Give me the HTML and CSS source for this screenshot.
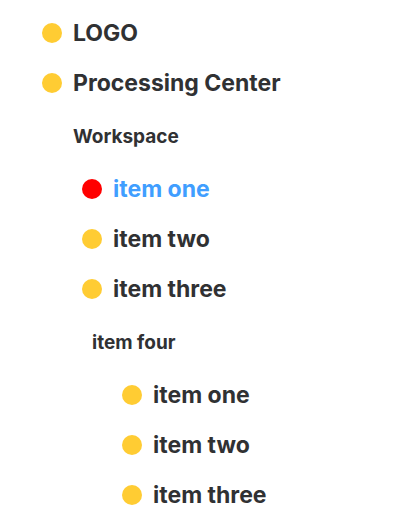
FILE: index.html
```html
<!DOCTYPE html>
<html lang="en">
<head>
    <meta charset="UTF-8">
    <title>Menu</title>
    <link rel="stylesheet" href="styles.css">
</head>
<body>
    <ul class="menu">
        <li class="item"><span class="dot"></span>LOGO</li>
        <li class="item"><span class="dot"></span>Processing Center</li>
        <li class="group">
            <div class="group-title">Workspace</div>
            <ul class="sub">
                <li class="item active"><span class="dot"></span>item one</li>
                <li class="item"><span class="dot"></span>item two</li>
                <li class="item"><span class="dot"></span>item three</li>
                <li class="group">
                    <div class="group-title">item four</div>
                    <ul class="sub">
                        <li class="item"><span class="dot"></span>item one</li>
                        <li class="item"><span class="dot"></span>item two</li>
                        <li class="item"><span class="dot"></span>item three</li>
                    </ul>
                </li>
            </ul>
        </li>
    </ul>
</body>
</html>
```

FILE: styles.css
```css
* {
    margin: 0;
    padding: 0;
    box-sizing: border-box;
}

body {
    font-family: Inter, "Noto Sans", sans-serif;
    background-color: #ffffff;
    color: #303133;
}

ul {
    list-style: none;
}

.menu {
    padding: 8px 0 0 42px;
}

.item {
    display: flex;
    align-items: center;
    gap: 11px;
    height: 50px;
    font-size: 23px;
    font-weight: 700;
}

.dot {
    width: 20px;
    height: 20px;
    border-radius: 50%;
    background-color: #ffcc33;
    flex-shrink: 0;
}

.item.active {
    color: #409eff;
}

.item.active .dot {
    background-color: #ff0000;
}

.group-title {
    display: flex;
    align-items: center;
    height: 56px;
    padding-left: 31px;
    font-size: 19px;
    font-weight: 700;
}

.sub {
    padding-left: 40px;
}

.sub .group-title {
    padding-left: 10px;
}
```
